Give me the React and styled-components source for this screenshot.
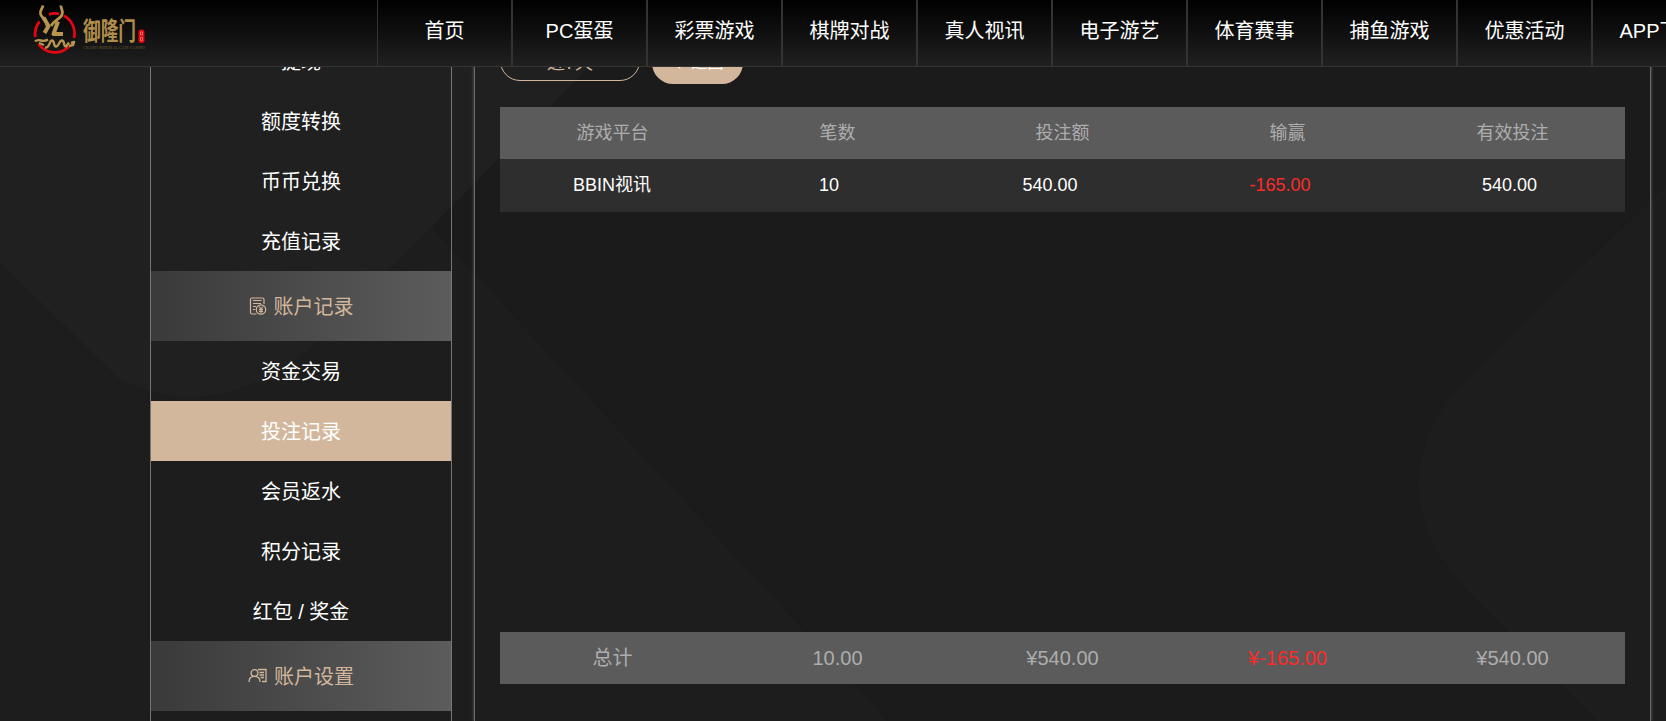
import React from 'react';
import styled, { createGlobalStyle } from 'styled-components';

const Global = createGlobalStyle`
  * { box-sizing: border-box; }
  html, body { margin: 0; height: 100%; overflow: hidden; background: #1b1b1b; }
  body { font-family: "Liberation Sans", "Noto Sans CJK SC", sans-serif; color: #fff; }
`;

const Page = styled.div`
  position: relative;
  height: 721px;
  overflow: hidden;
  background: #1b1b1b;
`;
const Backdrop = styled.svg`
  position: absolute;
  inset: 0;
  width: 1666px;
  height: 721px;
`;
const Header = styled.header`
  position: absolute;
  inset: 0 0 auto 0;
  z-index: 2;
  height: 67px;
  display: flex;
  overflow: hidden;
  border-bottom: 1px solid #333;
  background: linear-gradient(#000, #202020);
`;
const LogoArea = styled.div`
  flex: 0 0 377px;
  padding: 4px 0 0 32px;
`;
const Nav = styled.nav`
  flex: none;
  display: flex;
`;
const NavItem = styled.a`
  flex: none;
  width: 135px;
  height: 66px;
  border: solid #333;
  border-width: 0 1px;
  font-size: 20px;
  line-height: 62px;
  text-align: center;
  white-space: nowrap;
`;
const Content = styled.div`
  position: relative;
  height: 721px;
  display: flex;
  gap: 22px;
  padding: 0 15px 0 150px;
`;
const Sidebar = styled.aside`
  flex: 0 0 302px;
  padding-top: 31px;
  border: solid #757575;
  border-width: 0 1px;
`;
const MenuItem = styled.div`
  height: 60px;
  line-height: 62px;
  font-size: 20px;
  text-align: center;
  background: ${(p) => (p.$active ? '#d2b79c' : 'transparent')};
`;
const MenuTitle = styled.div`
  height: 70px;
  padding-top: 2px;
  display: flex;
  align-items: center;
  justify-content: center;
  gap: 7px;
  font-size: 20px;
  line-height: 68px;
  color: #d2b79c;
  background: linear-gradient(90deg, #3a3a3a, #5c5c5c);

  svg { margin-bottom: 2px; }
`;
const Panel = styled.main`
  flex: 1;
  display: flex;
  flex-direction: column;
  padding: 0 25px;
  border: solid #6a6a6a;
  border-width: 0 1px;
  box-shadow: 0 0 3px #666;
`;
const Toolbar = styled.div`
  height: 107px;
  display: flex;
  align-items: flex-start;
  gap: 12px;
`;
const RangePill = styled.div`
  width: 140px;
  height: 40px;
  margin-top: 41px;
  border: 1px solid #d2b79c;
  border-radius: 20px;
  font-size: 18px;
  line-height: 42px;
  text-align: center;
  color: #d2b79c;
`;
const BackButton = styled.div`
  width: 91px;
  height: 42px;
  margin-top: 42px;
  padding-left: 3px;
  display: flex;
  align-items: center;
  justify-content: center;
  gap: 10px;
  border-radius: 21px;
  background: #d2b79c;
  font-size: 16px;
  line-height: 42px;
`;
const Grid = styled.div`
  display: grid;
  text-align: center;
`;
const HeadRow = styled(Grid)`
  height: 52px;
  grid-template-columns: repeat(5, 1fr);
  background: #5b5b5b;
  color: #adadad;
  font-size: 18px;
  line-height: 52px;
`;
const BodyRow = styled(Grid)`
  height: 53px;
  grid-template-columns: 224px 210px 232px 228px 231px;
  background: #2e2e2e;
  font-size: 18px;
  line-height: 53px;
`;
const TotalRow = styled(HeadRow)`
  margin-top: 420px;
  font-size: 20px;
`;
const Cell = styled.span`
  color: ${(p) => (p.$loss ? '#ff2a2a' : 'inherit')};
`;

const Logo = () => (
  <svg width="116" height="54" viewBox="0 0 116 54" fill="none">
    <path d="M3.300 33A20 20 0 0 1 7.500 17.500M17 10.300A20 20 0 0 1 27 9.800M32 11.800A20 20 0 0 1 42 34M6.500 40A20 20 0 0 0 37 42.500" stroke="#e30613" strokeWidth="2.800" />
    <g stroke="#b8954f" strokeLinejoin="round">
      <path d="M11 1.500C10.500 5 7.500 6 8.500 10c1 4 6 5 6.500 12M29 1.500C28.500 5 32 7 30 11c-2 4-8 5-11 11" strokeWidth="2.800" />
      <path d="M11.500 13.500l5 8.500-4 7M26 17.500l-4.500 12.500H31" strokeWidth="4" />
      <path d="M3 37.500c4-4 7 2 13-2M7 39l5 2M13 43.500c5 1 4-7 7-7s1 6 4 6 3-6 6-6 1 6 4 6l3-4M37 42l4-1 1-3-3 1" strokeWidth="2.400" />
    </g>
    <text x="51" y="36" fontFamily="'Noto Sans CJK SC', sans-serif" fontSize="25" fontWeight="700" textLength="53" lengthAdjust="spacingAndGlyphs" fill="#b08d4a">御隆门</text>
    <text x="51" y="44.500" fontFamily="'Liberation Serif', serif" fontSize="4" textLength="62" lengthAdjust="spacingAndGlyphs" fill="#6b5830">GRAND IMPERIAL GATE CASINO</text>
    <rect x="106.500" y="25.500" width="6" height="13.500" rx="2.500" fill="#e30613" />
    <path d="M108.500 28h2v3h-2zM108.500 33.500h2v3h-2z" stroke="#f0a080" strokeWidth="0.600" />
  </svg>
);
const RecordIcon = () => (
  <svg width="18" height="18" viewBox="0 0 18 18" fill="none" stroke="#d2b79c" strokeWidth="1.200">
    <path d="M7.500 17H3a1.500 1.500 0 0 1-1.500-1.500v-13A1.500 1.500 0 0 1 3 1h10.500A1.500 1.500 0 0 1 15 2.500V7M4 3.500h8.500M4 6.500h8M4 9.500h3M4 12.500h2" />
    <circle cx="12" cy="12.500" r="4.700" />
    <path d="M10 9.500l2 2.500 2-2.500M12 12v4M10 12.500h4M10 14.300h4" />
  </svg>
);
const ProfileIcon = () => (
  <svg width="19" height="18" viewBox="0 0 19 18" fill="none" stroke="#d2b79c" strokeWidth="1.300">
    <circle cx="6.500" cy="6" r="3.400" />
    <path d="M1 15c0-3.500 2-5.600 5.500-5.600S12 11.500 12 15M10 2.500h8v12h-4M11.500 5.500H16M11.500 8H16M12.500 10.500H16" />
  </svg>
);

const nav = ['首页', 'PC蛋蛋', '彩票游戏', '棋牌对战', '真人视讯', '电子游艺', '体育赛事', '捕鱼游戏', '优惠活动', 'APP下载'];
const funds = ['提现', '额度转换', '币币兑换', '充值记录'];
const records = ['资金交易', '投注记录', '会员返水', '积分记录', '红包 / 奖金'];
const columns = ['游戏平台', '笔数', '投注额', '输赢', '有效投注'];
const row = ['BBIN视讯', '10', '540.00', '-165.00', '540.00'];
const totals = ['总计', '10.00', '¥540.00', '¥-165.00', '¥540.00'];

export default function App() {
  return (
    <Page>
      <Global />
      <Backdrop viewBox="0 0 1666 721">
        <path d="M0 0H222L887 721H0z" fill="#1d1d1d" />
        <path d="M0 0H655L320 340Q215 430 118 378L0 262z" fill="#202020" />
        <path d="M1666 186L1459 386Q1378 484 1459 582L1598 721H1666z" fill="#1d1d1d" />
      </Backdrop>
      <Header>
        <LogoArea><Logo /></LogoArea>
        <Nav>{nav.map((n) => <NavItem key={n}>{n}</NavItem>)}</Nav>
      </Header>
      <Content>
        <Sidebar>
          {funds.map((t) => <MenuItem key={t}>{t}</MenuItem>)}
          <MenuTitle><RecordIcon />账户记录</MenuTitle>
          {records.map((t) => <MenuItem key={t} $active={t === '投注记录'}>{t}</MenuItem>)}
          <MenuTitle><ProfileIcon />账户设置</MenuTitle>
        </Sidebar>
        <Panel>
          <Toolbar>
            <RangePill>近7天</RangePill>
            <BackButton>
              <svg width="7" height="12" viewBox="0 0 7 12" fill="none" stroke="#fff" strokeWidth="1.500"><path d="M6 1L1.500 6 6 11" /></svg>
              返回
            </BackButton>
          </Toolbar>
          <HeadRow>{columns.map((c) => <Cell key={c}>{c}</Cell>)}</HeadRow>
          <BodyRow>{row.map((c, i) => <Cell key={i} $loss={i === 3}>{c}</Cell>)}</BodyRow>
          <TotalRow>{totals.map((c, i) => <Cell key={i} $loss={i === 3}>{c}</Cell>)}</TotalRow>
        </Panel>
      </Content>
    </Page>
  );
}
